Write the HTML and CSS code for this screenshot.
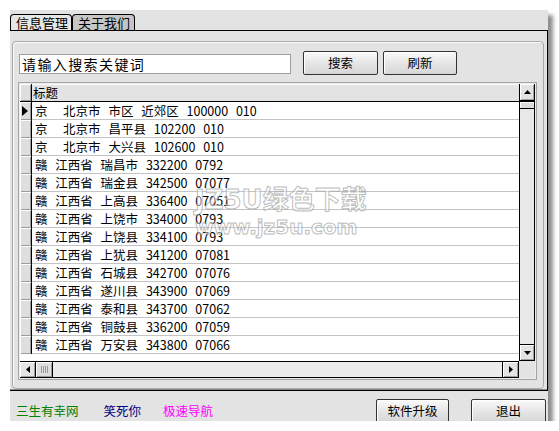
FILE: index.html
```html
<!DOCTYPE html>
<html lang="zh-CN">
<head>
<meta charset="utf-8">
<title>信息管理</title>
<link rel="stylesheet" href="styles.css">
</head>
<body>
<div class="window">
  <div class="tabs">
    <div class="tab active">信息管理</div>
    <div class="tab">关于我们</div>
  </div>
  <div class="page">
    <div class="group">
      <div class="search">
        <div class="input">请输入搜索关键词</div>
        <div class="btn btn-search">搜索</div>
        <div class="btn btn-refresh">刷新</div>
      </div>
      <div class="grid">
        <div class="data">
          <div class="row head"><div class="ind"></div><div class="cell">标题</div></div>
          <div class="row"><div class="ind"><svg class="cur" width="6" height="10" viewBox="0 0 6 10"><polygon points="0,0 6,5 0,10" fill="#000"/></svg></div><div class="cell">京  北京市 市区 近郊区 100000 010</div></div>
          <div class="row"><div class="ind"></div><div class="cell">京  北京市 昌平县 102200 010</div></div>
          <div class="row"><div class="ind"></div><div class="cell">京  北京市 大兴县 102600 010</div></div>
          <div class="row"><div class="ind"></div><div class="cell">赣 江西省 瑞昌市 332200 0792</div></div>
          <div class="row"><div class="ind"></div><div class="cell">赣 江西省 瑞金县 342500 07077</div></div>
          <div class="row"><div class="ind"></div><div class="cell">赣 江西省 上高县 336400 07051</div></div>
          <div class="row"><div class="ind"></div><div class="cell">赣 江西省 上饶市 334000 0793</div></div>
          <div class="row"><div class="ind"></div><div class="cell">赣 江西省 上饶县 334100 0793</div></div>
          <div class="row"><div class="ind"></div><div class="cell">赣 江西省 上犹县 341200 07081</div></div>
          <div class="row"><div class="ind"></div><div class="cell">赣 江西省 石城县 342700 07076</div></div>
          <div class="row"><div class="ind"></div><div class="cell">赣 江西省 遂川县 343900 07069</div></div>
          <div class="row"><div class="ind"></div><div class="cell">赣 江西省 泰和县 343700 07062</div></div>
          <div class="row"><div class="ind"></div><div class="cell">赣 江西省 铜鼓县 336200 07059</div></div>
          <div class="row"><div class="ind"></div><div class="cell">赣 江西省 万安县 343800 07066</div></div>
        </div>
        <div class="vscroll">
          <div class="sbtn up"><svg width="7" height="4" viewBox="0 0 7 4"><polygon points="0,4 3.5,0 7,4" fill="#000"/></svg></div>
          <div class="vthumb"></div>
          <div class="vtrack"></div>
          <div class="sbtn down"><svg width="7" height="4" viewBox="0 0 7 4"><polygon points="0,0 3.5,4 7,0" fill="#000"/></svg></div>
        </div>
        <div class="hscroll">
          <div class="hbtn left"><svg width="4" height="7" viewBox="0 0 4 7"><polygon points="4,0 0,3.5 4,7" fill="#000"/></svg></div>
          <div class="hthumb"><span></span><span></span><span></span><span></span></div>
          <div class="htrack"></div>
          <div class="hbtn right"><svg width="4" height="7" viewBox="0 0 4 7"><polygon points="0,0 4,3.5 0,7" fill="#000"/></svg></div>
        </div>
        <div class="corner"></div>
        <div class="watermark">
          <div class="wm1">JZ5U绿色下载</div>
          <div class="wm2">www.jz5u.com</div>
        </div>
      </div>
    </div>
  </div>
  <div class="bottom">
    <span class="link green">三生有幸网</span>
    <span class="link navy">笑死你</span>
    <span class="link magenta">极速导航</span>
    <div class="btn btn-upgrade">软件升级</div>
    <div class="btn btn-exit">退出</div>
  </div>
</div>
</body>
</html>
```
FILE: styles.css
```css
* { box-sizing: border-box; }
html, body { margin: 0; padding: 0; background: #fff; }
body {
  padding: 10px 0 0 10px;
  font-family: "Noto Sans CJK SC", "Liberation Sans", sans-serif;
  color: #000;
}
.window {
  width: 538px;
  height: 411px;
  background: #e3e3e3;
  box-shadow: 5px 5px 4px rgba(0,0,0,0.45);
  display: flex;
  flex-direction: column;
}
.tabs {
  height: 20px;
  padding-top: 4px;
  display: flex;
  align-items: flex-end;
}
.tab {
  height: 16px;
  border: 1px solid #000;
  border-bottom: none;
  border-radius: 4px 4px 0 0;
  font-size: 13px;
  line-height: 15px;
  padding-left: 5px;
  white-space: nowrap;
  background: #c6c6c6;
  width: 63px;
}
.tab.active { background: #e6e6e6; width: 62px; }
.page {
  flex: 1;
  border-top: 1px solid #000;
  border-right: 1px solid #000;
  border-bottom: 1px solid #000;
  box-shadow: inset 0 -1px 0 #8a8a8a;
  padding: 10px 3px 1px 2px;
  display: flex;
}
.group {
  flex: 1;
  border: 1px solid #a8a8a8;
  box-shadow: inset 1px 1px 0 #fbfbfb;
  border-radius: 4px;
  padding: 9px 5px 0 5px;
  display: flex;
  flex-direction: column;
}
.search {
  height: 24px;
  display: flex;
  align-items: flex-start;
}
.input {
  margin: 3px 0 0 1px;
  width: 272px;
  height: 20px;
  background: #fff;
  border: 1px solid #a0a0a0;
  font-size: 14px;
  line-height: 18px;
  letter-spacing: 1.4px;
  padding-left: 2px;
  white-space: nowrap;
  overflow: hidden;
}
.btn {
  height: 24px;
  border: 1px solid #333;
  border-radius: 2px;
  background: linear-gradient(#fafafa, #e6e6e6 50%, #d6d6d6);
  box-shadow: inset 1px 1px 0 #fff;
  font-size: 12.5px;
  line-height: 22px;
  text-align: center;
  white-space: nowrap;
}
.btn-search { width: 75px; margin-left: 12px; }
.btn-refresh { width: 74px; margin-left: 5px; }
.grid {
  position: relative;
  margin-top: 7px;
  width: 519px;
  height: 298px;
  border: 1px solid #a4a4a4;
  padding: 1px;
  background: #ececec;
  display: grid;
  grid-template-columns: 499px 16px;
  grid-template-rows: 277px 17px;
}
.data {
  background: #fff;
  overflow: hidden;
  font-size: 12.5px;
}
.row {
  display: flex;
  height: 18px;
}
.ind {
  width: 12px;
  flex: none;
  height: 18px;
  border-right: 1px solid #000;
  background: #dedede;
  box-shadow: inset 1px 1px 0 #fff, inset -1px -1px 0 #9c9c9c;
  display: flex;
  align-items: center;
  padding-left: 2px;
}
.cell {
  flex: 1;
  border-bottom: 1px solid #c4c4c4;
  line-height: 17px;
  padding-left: 3px;
  white-space: pre;
  word-spacing: 5px;
}
.row.head { background: #e3e3e3; }
.row.head .ind { border-bottom: 1px solid #000; }
.row.head .cell {
  border-bottom: 1px solid #000;
  padding-left: 1px;
  box-shadow: inset 0 1px 0 #fafafa;
}
.cur { display: block; }
.vscroll {
  border-left: 1px solid #000;
  border-right: 1px solid #000;
  display: flex;
  flex-direction: column;
  background: #e8e8e8;
}
.sbtn {
  height: 17px;
  background: #e3e3e3;
  box-shadow: inset 1px 1px 0 #fff, inset -1px -1px 0 #a0a0a0;
  display: flex;
  align-items: center;
  justify-content: center;
}
.sbtn.up { border-bottom: 2px solid #000; height: 18px; }
.sbtn.down { border-top: 1px solid #000; border-bottom: 1px solid #000; height: 17px; }
.vthumb {
  height: 7px;
  background: #dcdcdc;
  border-bottom: 1px solid #000;
  box-shadow: inset 1px 1px 0 #fff;
}
.vtrack { flex: 1; background: #e8e8e8; }
.hscroll {
  border-top: 1px solid #000;
  border-bottom: 1px solid #000;
  border-right: 1px solid #000;
  display: flex;
  background: #ececec;
}
.hbtn {
  width: 16px;
  background: #e3e3e3;
  box-shadow: inset 1px 1px 0 #fff, inset -1px -1px 0 #a0a0a0;
  display: flex;
  align-items: center;
  justify-content: center;
  border-right: 1px solid #000;
}
.hbtn.right { border-right: none; border-left: 1px solid #000; }
.hthumb {
  width: 17px;
  background: #dedede;
  box-shadow: inset 1px 1px 0 #fff, inset -1px -1px 0 #9c9c9c;
  border-right: 1px solid #000;
  display: flex;
  align-items: center;
  justify-content: center;
  gap: 1px;
}
.hthumb span {
  width: 1px;
  height: 7px;
  background: #9a9a9a;
}
.htrack { flex: 1; }
.corner { background: #e3e3e3; }
.watermark {
  position: absolute;
  left: 176px;
  top: 101px;
  pointer-events: none;
  font-family: "DejaVu Sans", "Noto Sans CJK SC", sans-serif;
  font-weight: bold;
  color: rgba(255,255,255,0.5);
  -webkit-text-stroke: 1px rgba(160,160,160,0.7);
  white-space: nowrap;
}
.wm1 { font-size: 26px; line-height: 32px; }
.wm2 { font-size: 20px; line-height: 22px; }
.bottom {
  height: 30px;
  overflow: hidden;
  display: flex;
  align-items: flex-start;
  padding: 8px 2px 0 6px;
}
.link {
  font-size: 12.5px;
  line-height: 16px;
  margin-top: 4px;
  white-space: nowrap;
}
.green { color: #008000; }
.navy { color: #000080; margin-left: 25px; }
.magenta { color: #ff00ff; margin-left: 22px; }
.btn-upgrade { width: 73px; margin-left: auto; }
.btn-exit { width: 75px; margin-left: 22px; }
```
